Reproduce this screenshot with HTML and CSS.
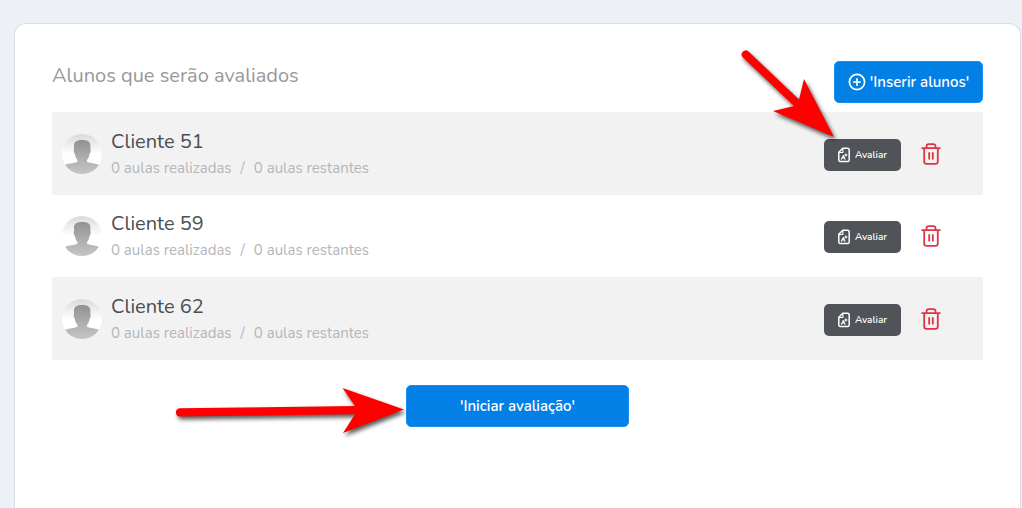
FILE: index.html
```html
<!DOCTYPE html>
<html lang="pt-BR">
<head>
<meta charset="utf-8">
<meta name="viewport" content="width=device-width, initial-scale=1">
<title>Avaliação</title>
<link rel="stylesheet" href="styles.css">
</head>
<body>
<svg class="defs" aria-hidden="true">
  <defs>
    <linearGradient id="backdrop" x1="0" y1="0" x2="0" y2="1">
      <stop offset="0" stop-color="#dadada"/><stop offset=".5" stop-color="#fff"/><stop offset="1" stop-color="#fff"/>
    </linearGradient>
    <linearGradient id="person" x1="0" y1="0" x2="0" y2="1">
      <stop offset="0" stop-color="#929292"/><stop offset="1" stop-color="#c6c6c6"/>
    </linearGradient>
    <clipPath id="round"><circle cx="20" cy="20" r="20"/></clipPath>
  </defs>
  <symbol id="avatar" viewBox="0 0 40 40">
    <g clip-path="url(#round)">
      <rect width="40" height="40" fill="url(#backdrop)"/>
      <path fill="url(#person)" d="M12 11.500C12 7.500 15 6 20.200 6S28.400 7.500 28.400 11.500V15.500C29 15.800 28.800 18.500 27.700 19.500 27.200 22.500 26.400 24.500 25 26V27.500C27 29.500 34 29 37 31V40H3V31C6 29 13.500 29.500 15.500 27.500V26C14 24.500 13.200 22.500 12.700 19.500 11.600 18.500 11.400 15.800 12 15.500z"/>
    </g>
  </symbol>
  <symbol id="sheet" viewBox="0 0 12 16">
    <g fill="none" stroke="#fff" stroke-linejoin="round" stroke-linecap="round">
      <path stroke-width="1.500" d="M4.800 1.200H9.600Q11.200 1.200 11.200 2.800V13Q11.200 14.600 9.600 14.600H2.400Q.8 14.600.8 13V5.200z"/>
      <path stroke-width="1.100" d="M1.200 5.500H4.900V1.600M3.400 12.200 5.300 8.600 7 12.200M4.200 10.900H6.400M6.700 8H9M7.900 6.900V9.100"/>
    </g>
  </symbol>
  <symbol id="trash" viewBox="0 0 20 22">
    <g fill="none" stroke="#dc3545" stroke-width="1.800" stroke-linecap="round" stroke-linejoin="round">
      <path d="M1.200 5.200H18.800M5.500 5V3.500Q5.500 1.200 7.800 1.200H12.200Q14.500 1.200 14.500 3.500V5M3.200 5.200V18.500Q3.200 20.900 5.600 20.900H14.400Q16.800 20.900 16.800 18.500V5.200M8.200 10V15.800M11.800 10V15.800"/>
    </g>
  </symbol>
</svg>

<main class="card">
  <header class="card-header">
    <h1 class="title">Alunos que serão avaliados</h1>
    <button class="btn btn-primary btn-insert" type="button">
      <svg class="icon-plus" viewBox="0 0 18 18" aria-hidden="true"><g fill="none" stroke="#fff" stroke-width="1.700" stroke-linecap="round"><circle cx="9" cy="9" r="7.600"/><path d="M9 5.800V12.200M5.800 9H12.200"/></g></svg>
      <span>'Inserir alunos'</span>
    </button>
  </header>

  <ul class="students">
    <li class="student">
      <svg class="avatar" aria-hidden="true"><use href="#avatar"/></svg>
      <div class="info">
        <h2 class="name">Cliente 51</h2>
        <p class="lessons"><span>0 aulas realizadas</span><span>/</span><span>0 aulas restantes</span></p>
      </div>
      <div class="evaluate">
        <button class="btn btn-dark" type="button"><svg class="icon-sheet" aria-hidden="true"><use href="#sheet"/></svg><span>Avaliar</span></button>
        <svg class="arrow arrow-down" viewBox="0 0 120 110" aria-hidden="true"><path fill="#f00" d="M18.500 11.500 69 59.500 74 39 104 97 43 71 64 66 13 17.500A4 4 0 0 1 18.500 11.500z"/></svg>
      </div>
      <button class="remove" type="button" aria-label="Remover Cliente 51"><svg class="icon-trash" aria-hidden="true"><use href="#trash"/></svg></button>
    </li>
    <li class="student">
      <svg class="avatar" aria-hidden="true"><use href="#avatar"/></svg>
      <div class="info">
        <h2 class="name">Cliente 59</h2>
        <p class="lessons"><span>0 aulas realizadas</span><span>/</span><span>0 aulas restantes</span></p>
      </div>
      <div class="evaluate">
        <button class="btn btn-dark" type="button"><svg class="icon-sheet" aria-hidden="true"><use href="#sheet"/></svg><span>Avaliar</span></button>
      </div>
      <button class="remove" type="button" aria-label="Remover Cliente 59"><svg class="icon-trash" aria-hidden="true"><use href="#trash"/></svg></button>
    </li>
    <li class="student">
      <svg class="avatar" aria-hidden="true"><use href="#avatar"/></svg>
      <div class="info">
        <h2 class="name">Cliente 62</h2>
        <p class="lessons"><span>0 aulas realizadas</span><span>/</span><span>0 aulas restantes</span></p>
      </div>
      <div class="evaluate">
        <button class="btn btn-dark" type="button"><svg class="icon-sheet" aria-hidden="true"><use href="#sheet"/></svg><span>Avaliar</span></button>
      </div>
      <button class="remove" type="button" aria-label="Remover Cliente 62"><svg class="icon-trash" aria-hidden="true"><use href="#trash"/></svg></button>
    </li>
  </ul>

  <div class="start">
    <button class="btn btn-primary btn-start" type="button">'Iniciar avaliação'</button>
    <svg class="arrow arrow-right" viewBox="0 0 250 60" aria-hidden="true"><path fill="#f00" d="M14 28.300 189 26 176.500 8 238 29.500 177 53 189 34.300 14 36.600A4.100 4.100 0 0 1 14 28.300z"/></svg>
  </div>
</main>
</body>
</html>
```
FILE: styles.css
```css
* {
  box-sizing: border-box;
}

body {
  margin: 0;
  min-height: 100vh;
  padding: 23px 1px 0 14px;
  display: flex;
  background: #edf1f6;
  color: #4b4e53;
  font-family: Nunito, "Open Sans", "Noto Sans", sans-serif;
}

.defs {
  position: absolute;
  width: 0;
  height: 0;
}

.card {
  flex: 1;
  padding: 37px 37px 24px;
  background: #fff;
  border: 1px solid #d9dce5;
  border-bottom: 0;
  border-radius: 12px 12px 0 0;
}

.card-header {
  display: flex;
  justify-content: space-between;
  align-items: flex-start;
  padding-bottom: 9px;
}

.title {
  margin: 0;
  font-size: 20px;
  line-height: 30px;
  font-weight: 400;
  color: #96999c;
}

.btn {
  display: inline-flex;
  align-items: center;
  justify-content: center;
  border: 1px solid transparent;
  border-radius: 5px;
  color: #fff;
  font-family: inherit;
  font-weight: 600;
  white-space: nowrap;
}

.btn-primary {
  height: 42px;
  padding: 0 12px;
  background: #0380e6;
  border-color: #1b8ff0;
  font-size: 15px;
}

.btn-insert {
  min-width: 149px;
  gap: 4px;
}

.icon-plus {
  width: 18px;
  height: 18px;
}

.students {
  margin: 0;
  padding: 0;
  list-style: none;
}

.student {
  display: flex;
  align-items: center;
  min-height: 83px;
  padding: 14px 42px 14px 10px;
}

.student:nth-child(odd) {
  background: #f2f2f2;
}

.student:nth-child(even) {
  min-height: 82px;
}

.avatar {
  flex: none;
  width: 40px;
  height: 40px;
}

.info {
  flex: 1;
  padding: 2px 0 0 9px;
}

.name {
  margin: 0;
  font-size: 20px;
  line-height: 26px;
  font-weight: 400;
}

.lessons {
  display: flex;
  gap: 9px;
  margin: 0;
  font-size: 15px;
  line-height: 26px;
  color: #b4b6b9;
}

.evaluate {
  position: relative;
  display: flex;
  margin-top: 2px;
}

.btn-dark {
  width: 77px;
  height: 32px;
  gap: 5px;
  padding: 0;
  background: #505357;
  font-size: 10px;
}

.icon-sheet {
  width: 12px;
  height: 16px;
}

.remove {
  display: flex;
  margin-left: 20px;
  padding: 0;
  background: none;
  border: 0;
}

.icon-trash {
  width: 20px;
  height: 22px;
}

.start {
  position: relative;
  width: 24%;
  margin: 25px auto 0;
}

.btn-start {
  width: 100%;
}

.arrow {
  position: absolute;
  overflow: visible;
  pointer-events: none;
  filter: drop-shadow(2px 3px 2px rgba(0, 0, 0, 0.65));
}

.arrow-down {
  left: -94px;
  top: -99px;
  width: 120px;
  height: 110px;
}

.arrow-right {
  right: 213px;
  top: -5px;
  width: 250px;
  height: 60px;
}
```
